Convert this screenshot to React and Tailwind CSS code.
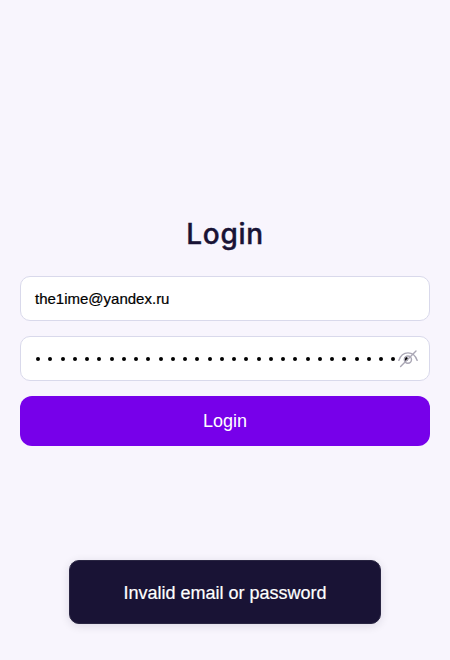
function EyeOff() {
  return (
    <svg className="absolute right-[11px] top-[11px] size-5" viewBox="0 0 20 20" fill="none" stroke="#aaa7b5" strokeWidth="1.4" strokeLinecap="round">
      <path d="M.8 12.4C2.6 7.3 5.8 4.9 10 4.9s7.4 2.4 9.2 7.5" />
      <circle cx="9.9" cy="11.6" r="3.6" />
      <path d="M2.6 18.6 18 3.1" />
    </svg>
  );
}

const DOTS = Array.from({ length: 31 });

export default function App() {
  return (
    <main className="flex h-screen w-full flex-col overflow-hidden bg-[#f8f5fd] px-5 pt-[213px] font-['Liberation_Sans',Arial,sans-serif]">
      <h1 className="h-[63px] text-center font-['Inter',sans-serif] text-[28px] leading-[42px] font-medium tracking-[0.7px] text-[#191335] [-webkit-text-stroke:0.4px_#191335]">Login</h1>
      <form className="flex flex-col gap-[15px]" onSubmit={(e) => e.preventDefault()}>
        <div className="flex h-[45px] items-center rounded-[10px] border border-[#d9d9eb] bg-white px-[14px] pt-0.5 text-[15px] text-black [-webkit-text-stroke:0.2px_#000]">
          the1ime@yandex.ru
        </div>
        <div className="relative flex h-[45px] items-center rounded-[10px] border border-[#d9d9eb] bg-white pl-[15px]">
          <div className="flex gap-[8.25px]">
            {DOTS.map((_, i) => (
              <span key={i} className="size-1 shrink-0 rounded-full bg-black" />
            ))}
          </div>
          <EyeOff />
        </div>
        <button className="h-[50px] rounded-[12px] bg-[#7700ea] text-[18px] text-white">Login</button>
      </form>
      <div className="mx-auto mt-[114px] flex h-16 w-[312px] shrink-0 items-center justify-center rounded-[10px] border border-[#292542] bg-[#191335] pt-0.5 text-[18px] text-white shadow-[0_2px_10px_rgba(25,19,53,0.12)] [-webkit-text-stroke:0.2px_#fff]">
        Invalid email or password
      </div>
    </main>
  );
}
